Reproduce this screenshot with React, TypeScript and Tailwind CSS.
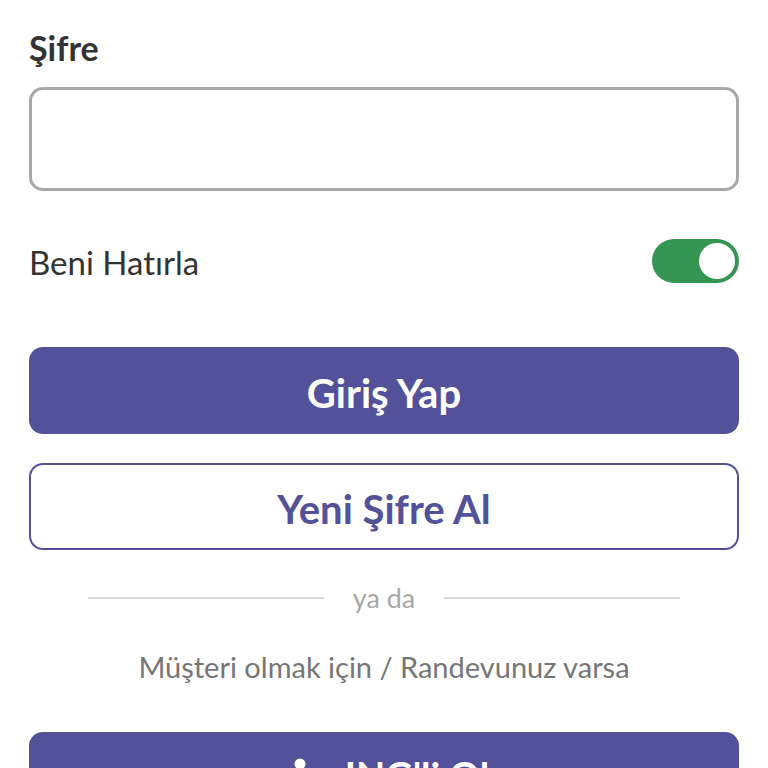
import { useState } from "react";

function CustomerIcon() {
  return (
    <svg className="h-9 w-[42px]" viewBox="0 0 42 36" fill="currentColor" aria-hidden="true">
      <circle cx="21" cy="6" r="5.5" />
      <path d="M15 14h12a4 4 0 0 1 4 4v8h-4v10H15V26h-4v-8a4 4 0 0 1 4-4z" />
    </svg>
  );
}

export default function App() {
  const [remember, setRemember] = useState(true);

  return (
    <main className="h-screen overflow-hidden bg-white font-['Lato','Open_Sans',sans-serif] text-[#333333] [font-variant-ligatures:none]">
      <form className="flex flex-col px-[29px] pt-7" onSubmit={(e) => e.preventDefault()}>
        <label htmlFor="password" className="text-[34px] leading-10 font-bold">
          Şifre
        </label>
        <input
          id="password"
          type="password"
          className="mt-[19px] h-[104px] w-full rounded-[14px] border-3 border-[#a8a8a8] bg-white px-6 text-[34px] outline-none"
        />

        <label className="mt-[46px] flex h-12 items-center justify-between text-[33px]">
          <span className="pt-1">Beni Hatırla</span>
          <input
            type="checkbox"
            role="switch"
            checked={remember}
            onChange={(e) => setRemember(e.target.checked)}
            className="flex h-11 w-[87px] shrink-0 appearance-none items-center rounded-full bg-[#a8a8a8] p-1 before:size-9 before:rounded-full before:bg-white checked:justify-end checked:bg-[#349651]"
          />
        </label>

        <button
          type="submit"
          className="mt-[62px] h-[87px] rounded-[14px] bg-[#525199] pt-1 text-[40px] font-bold text-white"
        >
          Giriş Yap
        </button>
        <button
          type="button"
          className="mt-[29px] h-[87px] rounded-[14px] border-2 border-[#525199] bg-white pt-1 text-[40px] font-bold text-[#525199]"
        >
          Yeni Şifre Al
        </button>

        <div className="mx-[59px] mt-7 flex h-10 items-center gap-[29px] text-[27px] text-[#a8a8a8]">
          <span className="h-0.5 flex-1 bg-[#d9d9d9]" />
          <span>ya da</span>
          <span className="h-0.5 flex-1 bg-[#d9d9d9]" />
        </div>

        <p className="mt-[29px] text-center text-[29px] leading-10 text-[#767676]">
          Müşteri olmak için / Randevunuz varsa
        </p>

        <button
          type="button"
          className="mt-[45px] flex h-[87px] items-center justify-center gap-6 rounded-[14px] bg-[#525199] text-[38px] font-bold text-white"
        >
          <CustomerIcon />
          <span>ING'li Ol</span>
        </button>
      </form>
    </main>
  );
}
